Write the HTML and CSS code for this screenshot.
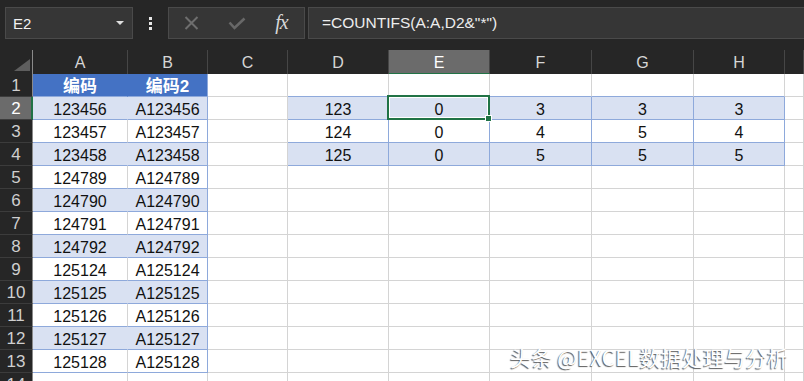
FILE: index.html
```html
<!DOCTYPE html>
<html lang="zh-CN">
<head>
  <meta charset="UTF-8" />
  <title>COUNTIFS</title>
  <link rel="stylesheet" href="styles.css">
</head>
<body>
  <!-- Formula bar -->
  <div class="topbar">
    <div class="namebox"><span>E2</span><span class="arrow"></span></div>
    <div class="dots"><span></span><span></span><span></span></div>
    <div class="fbuttons">
      <span class="fbtn">
        <svg width="15" height="14" viewBox="0 0 15 14"><path d="M1.5 1 L13.5 13 M13.5 1 L1.5 13" stroke="#6e6e6e" stroke-width="2" fill="none"/></svg>
      </span>
      <span class="fbtn">
        <svg width="18" height="13" viewBox="0 0 18 13"><path d="M1.5 5.5 L6.5 11 L16.5 1.5" stroke="#686868" stroke-width="2.6" fill="none"/></svg>
      </span>
      <span class="fbtn fx">fx</span>
    </div>
    <div class="formula">=COUNTIFS(A:A,D2&amp;"*")</div>
  </div>

  <!-- Sheet -->
  <div class="sheet">
    <div class="row head">
      <div class="cell corner"><span class="tri"></span></div>
      <div class="cell ch">A</div>
      <div class="cell ch">B</div>
      <div class="cell ch">C</div>
      <div class="cell ch">D</div>
      <div class="cell ch on">E</div>
      <div class="cell ch">F</div>
      <div class="cell ch">G</div>
      <div class="cell ch">H</div>
      <div class="cell ch"></div>
    </div>

    <div class="row">
      <div class="cell rh">1</div>
      <div class="cell hd ta">编码</div>
      <div class="cell hd tb">编码2</div>
      <div class="cell"></div>
      <div class="cell above"></div>
      <div class="cell above"></div>
      <div class="cell above"></div>
      <div class="cell above"></div>
      <div class="cell above"></div>
      <div class="cell"></div>
    </div>

    <div class="row">
      <div class="cell rh on">2</div>
      <div class="cell band ta">123456</div>
      <div class="cell band tb">A123456</div>
      <div class="cell"></div>
      <div class="cell band tx">123</div>
      <div class="cell band tx current">0<span class="sel"><span class="handle"></span></span></div>
      <div class="cell band tx">3</div>
      <div class="cell band tx">3</div>
      <div class="cell band tx">3</div>
      <div class="cell"></div>
    </div>

    <div class="row">
      <div class="cell rh">3</div>
      <div class="cell ta">123457</div>
      <div class="cell tb">A123457</div>
      <div class="cell"></div>
      <div class="cell tx">124</div>
      <div class="cell tx">0</div>
      <div class="cell tx">4</div>
      <div class="cell tx">5</div>
      <div class="cell tx">4</div>
      <div class="cell"></div>
    </div>

    <div class="row">
      <div class="cell rh">4</div>
      <div class="cell band ta">123458</div>
      <div class="cell band tb">A123458</div>
      <div class="cell"></div>
      <div class="cell band tx">125</div>
      <div class="cell band tx">0</div>
      <div class="cell band tx">5</div>
      <div class="cell band tx">5</div>
      <div class="cell band tx">5</div>
      <div class="cell"></div>
    </div>

    <div class="row">
      <div class="cell rh">5</div>
      <div class="cell ta">124789</div>
      <div class="cell tb">A124789</div>
      <div class="cell"></div><div class="cell"></div><div class="cell"></div><div class="cell"></div><div class="cell"></div><div class="cell"></div><div class="cell"></div>
    </div>

    <div class="row">
      <div class="cell rh">6</div>
      <div class="cell band ta">124790</div>
      <div class="cell band tb">A124790</div>
      <div class="cell"></div><div class="cell"></div><div class="cell"></div><div class="cell"></div><div class="cell"></div><div class="cell"></div><div class="cell"></div>
    </div>

    <div class="row">
      <div class="cell rh">7</div>
      <div class="cell ta">124791</div>
      <div class="cell tb">A124791</div>
      <div class="cell"></div><div class="cell"></div><div class="cell"></div><div class="cell"></div><div class="cell"></div><div class="cell"></div><div class="cell"></div>
    </div>

    <div class="row">
      <div class="cell rh">8</div>
      <div class="cell band ta">124792</div>
      <div class="cell band tb">A124792</div>
      <div class="cell"></div><div class="cell"></div><div class="cell"></div><div class="cell"></div><div class="cell"></div><div class="cell"></div><div class="cell"></div>
    </div>

    <div class="row">
      <div class="cell rh">9</div>
      <div class="cell ta">125124</div>
      <div class="cell tb">A125124</div>
      <div class="cell"></div><div class="cell"></div><div class="cell"></div><div class="cell"></div><div class="cell"></div><div class="cell"></div><div class="cell"></div>
    </div>

    <div class="row">
      <div class="cell rh">10</div>
      <div class="cell band ta">125125</div>
      <div class="cell band tb">A125125</div>
      <div class="cell"></div><div class="cell"></div><div class="cell"></div><div class="cell"></div><div class="cell"></div><div class="cell"></div><div class="cell"></div>
    </div>

    <div class="row">
      <div class="cell rh">11</div>
      <div class="cell ta">125126</div>
      <div class="cell tb">A125126</div>
      <div class="cell"></div><div class="cell"></div><div class="cell"></div><div class="cell"></div><div class="cell"></div><div class="cell"></div><div class="cell"></div>
    </div>

    <div class="row">
      <div class="cell rh">12</div>
      <div class="cell band ta">125127</div>
      <div class="cell band tb">A125127</div>
      <div class="cell"></div><div class="cell"></div><div class="cell"></div><div class="cell"></div><div class="cell"></div><div class="cell"></div><div class="cell"></div>
    </div>

    <div class="row">
      <div class="cell rh">13</div>
      <div class="cell ta">125128</div>
      <div class="cell tb">A125128</div>
      <div class="cell"></div><div class="cell"></div><div class="cell"></div><div class="cell"></div><div class="cell"></div><div class="cell"></div><div class="cell"></div>
    </div>

    <div class="row">
      <div class="cell rh">14</div>
      <div class="cell"></div><div class="cell"></div><div class="cell"></div><div class="cell"></div><div class="cell"></div><div class="cell"></div><div class="cell"></div><div class="cell"></div><div class="cell"></div>
    </div>
  </div>

  <!-- Watermark -->
  <div class="watermark">头条 @EXCEL数据处理与分析</div>
</body>
</html>
```

FILE: styles.css
```css
body {
  margin: 0;
  width: 804px;
  height: 381px;
  overflow: hidden;
  position: relative;
  background-color: #262626;
  font-family: "Liberation Sans", "Noto Sans CJK SC", sans-serif;
}
.topbar {
  height: 50px;
  box-sizing: border-box;
  padding-top: 7px;
  display: flex;
  align-items: flex-start;
}
.namebox {
  margin-left: 5px;
  width: 128px;
  height: 32px;
  box-sizing: border-box;
  padding: 0 8px 0 7px;
  background-color: #363636;
  border: 1px solid #4a4a4a;
  display: flex;
  align-items: center;
  color: #f2f2f2;
  font-size: 15px;
}
.namebox .arrow {
  margin-left: auto;
  width: 0;
  height: 0;
  border-left: 4px solid transparent;
  border-right: 4px solid transparent;
  border-top: 4px solid #dedede;
}
.dots {
  margin-left: 16px;
  height: 32px;
  display: flex;
  flex-direction: column;
  justify-content: center;
  gap: 2px;
}
.dots span {
  display: block;
  width: 3px;
  height: 3px;
  background-color: #e6e6e6;
}
.fbuttons {
  margin-left: 16px;
  width: 137px;
  height: 32px;
  box-sizing: border-box;
  background-color: #363636;
  border: 1px solid #4a4a4a;
  display: flex;
  align-items: center;
}
.fbtn {
  width: 45px;
  display: flex;
  justify-content: center;
  align-items: center;
}
.fbtn.fx {
  font-family: "Liberation Serif", serif;
  font-style: italic;
  font-size: 20px;
  color: #d8d8d8;
  letter-spacing: -1px;
  padding-bottom: 2px;
}
.formula {
  margin-left: 3px;
  flex: 1;
  height: 32px;
  box-sizing: border-box;
  padding-left: 13px;
  background-color: #363636;
  border: 1px solid #4a4a4a;
  border-right: none;
  display: flex;
  align-items: center;
  color: #ededed;
  font-size: 15.5px;
}
.row {
  display: grid;
  grid-template-columns: 33px 95px 80px 80px 101px 101px 102px 102px 91px 1fr;
  height: 23px;
}
.row.head {
  height: 24px;
}
.cell {
  box-sizing: border-box;
  height: 100%;
  background-color: #fff;
  border-right: 1px solid #d4d4d4;
  border-bottom: 1px solid #d4d4d4;
  text-align: center;
  font-size: 16px;
  line-height: 18px;
  padding-top: 4px;
  color: #111;
  white-space: nowrap;
}
.corner {
  background-color: #262626;
  border-right: 1px solid #8a8a8a;
  border-bottom: 1px solid #8a8a8a;
  display: flex;
  justify-content: flex-end;
  align-items: flex-end;
  padding: 0 2px 3px 0;
}
.corner .tri {
  width: 16px;
  height: 12px;
  background-color: #5e5e5e;
  clip-path: polygon(100% 0, 100% 100%, 0 100%);
}
.ch {
  background-color: #262626;
  border-right: 1px solid #464646;
  border-bottom: 1px solid #8a8a8a;
  color: #d6d6d6;
  line-height: 21px;
  padding-top: 2px;
}
.ch.on {
  background-color: #6b6b6b;
  color: #fff;
  border-bottom: 2px solid #217346;
}
.rh {
  background-color: #262626;
  border-right: 1px solid #8a8a8a;
  border-bottom: 1px solid #3c3c3c;
  color: #cfcfcf;
  font-size: 17px;
  padding-top: 3px;
}
.rh.on {
  background-color: #6b6b6b;
  color: #fff;
  border-right: 2px solid #217346;
  padding-left: 1px;
}
.hd {
  background-color: #4472c4;
  color: #fff;
  font-weight: bold;
  font-size: 17px;
}
.ta,
.tb {
  border-bottom-color: #8ea9db;
}
.tb {
  border-right-color: #8ea9db;
}
.hd.ta {
  border-right-color: #4472c4;
}
.band {
  background-color: #d9e1f2;
}
.band.ta {
  border-right-color: #d9e1f2;
}
.above {
  border-bottom-color: #8ea9db;
}
.tx {
  border-right-color: #8ea9db;
  border-bottom-color: #8ea9db;
}
.current {
  position: relative;
}
.sel {
  position: absolute;
  left: -2px;
  top: -2px;
  right: -1px;
  bottom: -1px;
  border: 2px solid #217346;
  box-shadow: inset 0 0 0 1px #fff;
  z-index: 2;
}
.handle {
  position: absolute;
  right: -4px;
  bottom: -4px;
  width: 5px;
  height: 5px;
  background-color: #217346;
  border: 1px solid #fff;
}
.watermark {
  position: absolute;
  left: 510px;
  top: 342px;
  font-family: "Noto Sans CJK SC", sans-serif;
  font-size: 21px;
  letter-spacing: 0.2px;
  color: #fff;
  text-shadow: -1px 1px 1px rgba(0, 0, 0, 0.65);
  white-space: nowrap;
}
```
